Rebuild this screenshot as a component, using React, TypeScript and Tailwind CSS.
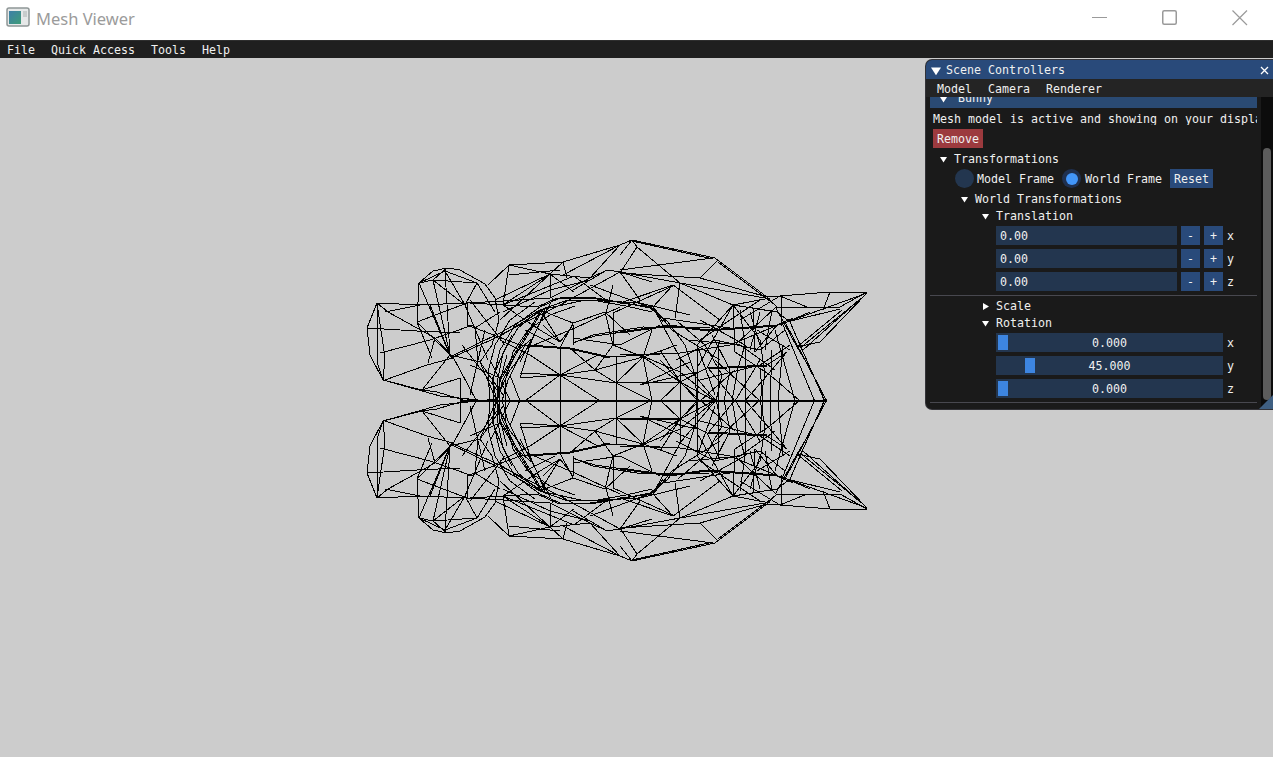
import { ReactNode } from "react";

// upper half of the wireframe in page coordinates, the lower half is mirrored
const MESH: number[][] = [
  // left ear
  [377,303,367,328,370,355,383,380,422,390,460,378],
  [377,303,377,362,383,380],[377,303,385,358,383,380],[377,303,388,312,435,338,453,357],
  [367,328,417,331,460,333],[380,353,430,340,473,325],[385,380,427,365,453,358],[422,390,450,355],
  [417,322,432,358],[428,363,435,338],[377,303,420,305,467,303,503,301,550,298],[385,312,420,305],
  [383,380,440,396,497,402],[422,390,437,392,470,402],
  // head
  [417,322,419,283,433,271,447,268,460,270,485,284,495,298,499,320,492,345,480,362],
  [419,283,445,271,477,283],[419,283,433,280,447,268],[433,280,450,355],[445,270,450,355],[419,283,450,355],
  [417,322,450,355],[477,283,465,305,445,271],[477,283,495,312],[467,303,467,325,475,328,500,312],
  [433,280,477,283],[433,280,465,305],[417,322,467,303],[475,328,478,362],[460,378,460,402],
  [450,355,480,362,497,402],[453,357,476,400],[465,305,488,360],[430,305,450,355],
  // long diagonals through the neck
  [450,357,500,333,540,310],[451,358,502,335,541,311],[500,378,520,345,540,312],[501,379,521,346,541,313],
  [520,362,553,298],[500,335,560,305,620,272],[527,348,575,328,620,307],[503,312,550,290,590,280],
  [500,320,550,274],[470,365,500,378,497,402],[490,360,510,400],[480,362,503,395],[462,345,497,390],
  [503,305,540,330,560,342],[475,328,520,345],[500,340,530,355],[470,300,505,345],[485,330,470,395],
  // crown
  [488,285,509,265,563,262,620,245,632,240],[509,265,503,305],[509,265,550,274],[563,262,550,274],
  [563,262,567,278],[550,274,550,298],[550,274,503,305],[550,274,590,278,607,270],[563,275,620,245],
  [607,270,620,272,652,282],[607,270,573,290],[590,278,550,298],[620,245,590,278],[550,274,574,292],
  [509,275,560,270],[495,300,550,274],[503,305,574,276],[574,276,610,303],[620,272,640,300],
  // top centre
  [632,240,715,258,767,297,780,296,830,292,867,292],[632,241,713,259],[620,255,632,240,637,247,620,273],
  [637,247,680,283],[620,270,713,258],[620,273,700,278,718,260],[700,278,767,297],[680,283,765,298],
  [673,285,620,303],[673,285,653,307],[680,283,675,318],[680,283,733,305],[718,262,775,305],
  [620,272,680,283],[675,285,613,313],[606,313,613,285],[590,285,652,308],[673,285,720,320],
  [733,305,770,298],[733,305,760,340],[653,307,672,330],
  [620,303,653,307,680,358,717,402],[653,307,663,322],
  // right ear
  [830,292,823,310],[780,296,807,307],[781,296,781,326],[767,297,777,307],[776,307,840,307],
  [867,292,840,307],[787,322,867,293],[787,322,840,309],[820,342,867,293],[797,347,820,342],
  [797,347,842,310],[800,348,863,297],[803,350,860,299],[785,322,827,402],[790,322,825,402],
  [781,320,815,402],[797,347,808,365,827,402],[776,308,797,347],[733,305,777,312,790,322],
  [740,310,745,345],[750,312,760,345],[760,312,750,350],[772,310,765,350],[776,307,735,345],
  [760,300,700,340],[780,296,740,320],[810,312,780,325],
  // right side of the body
  [697,345,733,305,753,308],[733,305,735,352],[733,305,697,368],[753,308,755,352,777,325],
  [707,368,767,365,787,352],[708,369,767,366],[640,355,680,372,717,402],[620,382,680,382,717,402],
  [680,382,707,368,720,342],[760,368,763,402],[757,330,790,350],[735,352,770,375],[745,345,745,401],
  [708,368,735,401],[787,352,745,401],[770,375,800,401],[775,330,795,401],[700,320,745,345],[672,330,720,360],
  // rings
  [493,401,494,375,500,350,515,325,540,307,560,298,590,297,625,303,650,308,668,322,685,345,695,375,697,401],
  [497,401,498,378,503,353,518,328,540,310,565,301,592,300,626,306,652,312],
  [505,401,506,378,513,352,528,330,550,315,575,306],[500,401,499,385,507,355],
  [490,401,488,372,495,345,510,320,535,302],[497,401,492,380,500,360,512,335],
  [497,401,503,380,518,350,533,338],[502,401,508,380,525,345],[495,401,510,370,530,345,545,310],
  [470,303,537,307,557,298,590,298,650,307,663,318,730,328],[540,310,585,300,640,303,690,315],
  [573,343,593,335,643,327,710,328],[575,342,595,336,643,329],[620,332,670,325,707,330,777,325,793,318],
  [620,333,670,326,707,331,777,326],[530,345,570,348,610,357,643,355,677,353],[530,346,570,349,610,358],
  [620,355,680,353,730,345,785,322],[676,360,715,340,760,350,785,330],[688,340,740,345,775,370],
  [716,401,722,375,705,345,678,322],[724,401,730,370,712,335],[732,401,738,368,745,345],
  [770,401,772,350],[778,401,783,345],[760,401,765,375,760,340],[700,380,760,365,790,345],
  // vertical struts and middle
  [460,401,827,401],[697,345,697,402],[718,342,718,402],[680,358,680,402],
  [660,360,697,400],[697,345,715,395],[715,360,760,401],[735,370,700,401],[760,360,735,401],[640,385,697,372],
  // centre triangles
  [560,375,616,383],[560,375,595,370,616,383],[595,370,643,357],[616,383,643,357],[616,383,652,401],
  [616,383,617,401],[616,383,680,382],[616,383,617,357],[560,375,560,348],[560,375,520,378],
  [560,375,525,401],[560,375,560,402],[560,375,600,401],[595,370,570,348],[595,370,613,345],
  [643,357,680,382],[643,357,652,401],[643,357,613,345],[643,357,677,345],[573,323,560,348],
  [573,323,605,312],[573,323,540,310],[605,312,613,345],[605,312,630,335],[613,313,613,345],
  [560,342,573,325],[530,355,560,375],[598,355,560,375],[543,325,560,342],[573,325,573,345],
  [573,338,620,345],[520,373,560,375],[520,345,560,348],[530,345,520,378],[510,375,520,401],
  [525,330,555,345],[540,310,560,342],[643,357,652,330],[620,345,660,325],[680,382,700,401],
  [680,382,660,401],[660,350,680,382],[640,385,690,362],
];

function Arrow({ open = true, size = 7 }: { open?: boolean; size?: number }) {
  return (
    <svg width={size} height={size} viewBox="0 0 7 7" className="shrink-0 fill-white">
      {open ? <path d="M0 1h7L3.5 6.5z" /> : <path d="M1 0l6 3.5L1 7z" />}
    </svg>
  );
}

function TreeRow({ left, open, label }: { left: string; open?: boolean; label: string }) {
  return (
    <div className={`flex h-[13px] items-center pt-[2px] ${left}`}>
      <Arrow open={open} />
      <span className="ml-[7px]">{label}</span>
    </div>
  );
}

function InputRow({ axis }: { axis: string }) {
  return (
    <div className="flex h-[19px] items-center pl-[66px]">
      <div className="flex h-full w-[181px] items-center bg-[#23364f] pl-[4px] pt-[2px]">0.00</div>
      <button className="ml-[4px] h-full w-[19px] bg-[#294a7a] pt-[2px]">-</button>
      <button className="ml-[4px] h-full w-[19px] bg-[#294a7a] pt-[2px]">+</button>
      <span className="ml-[4px] pt-[2px]">{axis}</span>
    </div>
  );
}

function SliderRow({ axis, value, offset }: { axis: string; value: string; offset: string }) {
  return (
    <div className="flex h-[19px] items-center pl-[66px]">
      <div className="relative flex h-full w-[227px] items-center justify-center bg-[#23364f] pt-[2px]">
        <div className={`absolute top-[2px] h-[15px] w-[10px] bg-[#3d85e0] ${offset}`} />
        <span className="relative">{value}</span>
      </div>
      <span className="ml-[4px] pt-[2px]">{axis}</span>
    </div>
  );
}

function Menu({ items, className }: { items: string[]; className: string }) {
  return (
    <div className={`flex shrink-0 items-center gap-4 ${className}`}>
      {items.map((item) => (
        <span key={item}>{item}</span>
      ))}
    </div>
  );
}

function WindowIcon({ children }: { children: ReactNode }) {
  return (
    <svg width="72" height="40" viewBox="0 0 72 40" fill="none" stroke="#9a9a9a">
      {children}
    </svg>
  );
}

export default function App() {
  return (
    <div className="flex h-screen w-full flex-col overflow-hidden bg-[#cccccc] font-['DejaVu_Sans_Mono',monospace] text-[11.63px] text-[#f0f0f0]">
      {/* Title bar */}
      <header className="flex h-[40px] shrink-0 items-center bg-white pl-[6px]">
        <svg width="24" height="20" viewBox="0 0 24 20" className="mb-[6px]">
          <rect x="1" y="1" width="22" height="18" rx="2" fill="#e6e8e8" stroke="#8f9696" strokeWidth="1.5" />
          <defs>
            <linearGradient id="ic" x1="0" y1="0" x2="1" y2="1">
              <stop offset="0" stopColor="#3f7fa8" />
              <stop offset="1" stopColor="#3f9c78" />
            </linearGradient>
          </defs>
          <rect x="3" y="4" width="12" height="13" fill="url(#ic)" />
          <rect x="17" y="4" width="4" height="6" fill="#c8cccc" />
        </svg>
        <span className="mb-[2px] ml-[6px] font-['Noto_Sans',sans-serif] text-[16.5px] text-[#9b9b9b]">Mesh Viewer</span>
        <div className="ml-auto flex">
          <WindowIcon>
            <path d="M35 17.5h15" />
          </WindowIcon>
          <WindowIcon>
            <rect x="33.75" y="10.75" width="13.5" height="13.5" rx="1.5" strokeWidth="1.5" />
          </WindowIcon>
          <WindowIcon>
            <path d="M31.5 10.5l14.5 14.5M46 10.5L31.5 25" strokeWidth="1.2" />
          </WindowIcon>
        </div>
      </header>

      {/* Main menu */}
      <Menu
        items={["File", "Quick Access", "Tools", "Help"]}
        className="h-[18px] border-t border-[#2e2e2e] bg-[#1f1f1f] pl-[7px] pt-[2px]"
      />

      <main className="relative flex-1">
        {/* Wireframe */}
        <svg className="absolute left-0 top-[-58px]" width="1273" height="757" fill="none" stroke="#000" strokeWidth="1" shapeRendering="crispEdges">
          {MESH.map((line, i) => (
            <g key={i}>
              <polyline points={line.join(" ")} />
              <polyline points={line.map((v, j) => (j % 2 ? 801 - v : v)).join(" ")} />
            </g>
          ))}
        </svg>

        {/* Floating ImGui window */}
        <section className="absolute right-0 top-[2px] flex h-[349px] w-[347px] flex-col overflow-hidden rounded-l-[6px] bg-[#1a1a1a] shadow-[0_0_0_1px_#333338]">
          <div className="flex h-[19px] shrink-0 items-center bg-[#294a7a] pl-[5px] pt-[2px]">
            <Arrow size={10} />
            <span className="ml-[5px]">Scene Controllers</span>
            <svg width="9" height="9" viewBox="0 0 9 9" className="ml-auto mr-[4px] stroke-white" strokeWidth="1.3">
              <path d="M1 1l7 7M8 1L1 8" />
            </svg>
          </div>
          <Menu items={["Model", "Camera", "Renderer"]} className="h-[18px] bg-[#242424] pl-[11px] pt-[3px]" />

          <div className="flex min-h-0 flex-1">
            <div className="min-w-0 flex-1 overflow-hidden">
              <div className="-mt-[8px] flex flex-col gap-[4px] pl-[4px] pr-[4px]">
                <div className="flex h-[19px] items-center bg-[#2a4a73] pl-[10px] pt-[1px]">
                  <Arrow />
                  <span className="ml-[11px]">Bunny</span>
                </div>
                <div className="h-[13px] overflow-hidden whitespace-nowrap pl-[3px] leading-[14px]">
                  Mesh model is active and showing on your display
                </div>
                <div className="pl-[3px]">
                  <button className="h-[19px] w-[50px] bg-[#9c3a3e] pt-[2px]">Remove</button>
                </div>
                <TreeRow left="pl-[10px]" label="Transformations" />
                <div className="flex h-[19px] items-center pl-[25px]">
                  <span className="h-[19px] w-[19px] rounded-full bg-[#23364f]" />
                  <span className="ml-[3px] pt-[2px]">Model Frame</span>
                  <span className="ml-[8px] flex h-[19px] w-[19px] items-center justify-center rounded-full bg-[#1f3050]">
                    <span className="h-[12px] w-[12px] rounded-full bg-[#4296fa]" />
                  </span>
                  <span className="ml-[4px] pt-[2px]">World Frame</span>
                  <button className="ml-[8px] h-[19px] w-[43px] bg-[#294a7a] pt-[2px]">Reset</button>
                </div>
                <TreeRow left="pl-[31px]" label="World Transformations" />
                <TreeRow left="pl-[52px]" label="Translation" />
                <InputRow axis="x" />
                <InputRow axis="y" />
                <InputRow axis="z" />
                <div className="h-px bg-[#48484f]" />
                <div className="-mt-[1px]">
                  <TreeRow left="pl-[52px]" open={false} label="Scale" />
                </div>
                <TreeRow left="pl-[52px]" label="Rotation" />
                <SliderRow axis="x" value="0.000" offset="left-[2px]" />
                <SliderRow axis="y" value="45.000" offset="left-[29px]" />
                <SliderRow axis="z" value="0.000" offset="left-[2px]" />
                <div className="h-px bg-[#48484f]" />
              </div>
            </div>
            {/* Scrollbar */}
            <div className="w-[12px] shrink-0 bg-[#0c0c0c] px-[2px] pt-[51px]">
              <div className="h-[252px] rounded-full bg-[#5c5c5c]" />
            </div>
          </div>
          <svg width="14" height="14" viewBox="0 0 14 14" className="absolute bottom-0 right-0 fill-[#3f5f82]">
            <path d="M14 0v14H0z" />
          </svg>
        </section>
      </main>
    </div>
  );
}
